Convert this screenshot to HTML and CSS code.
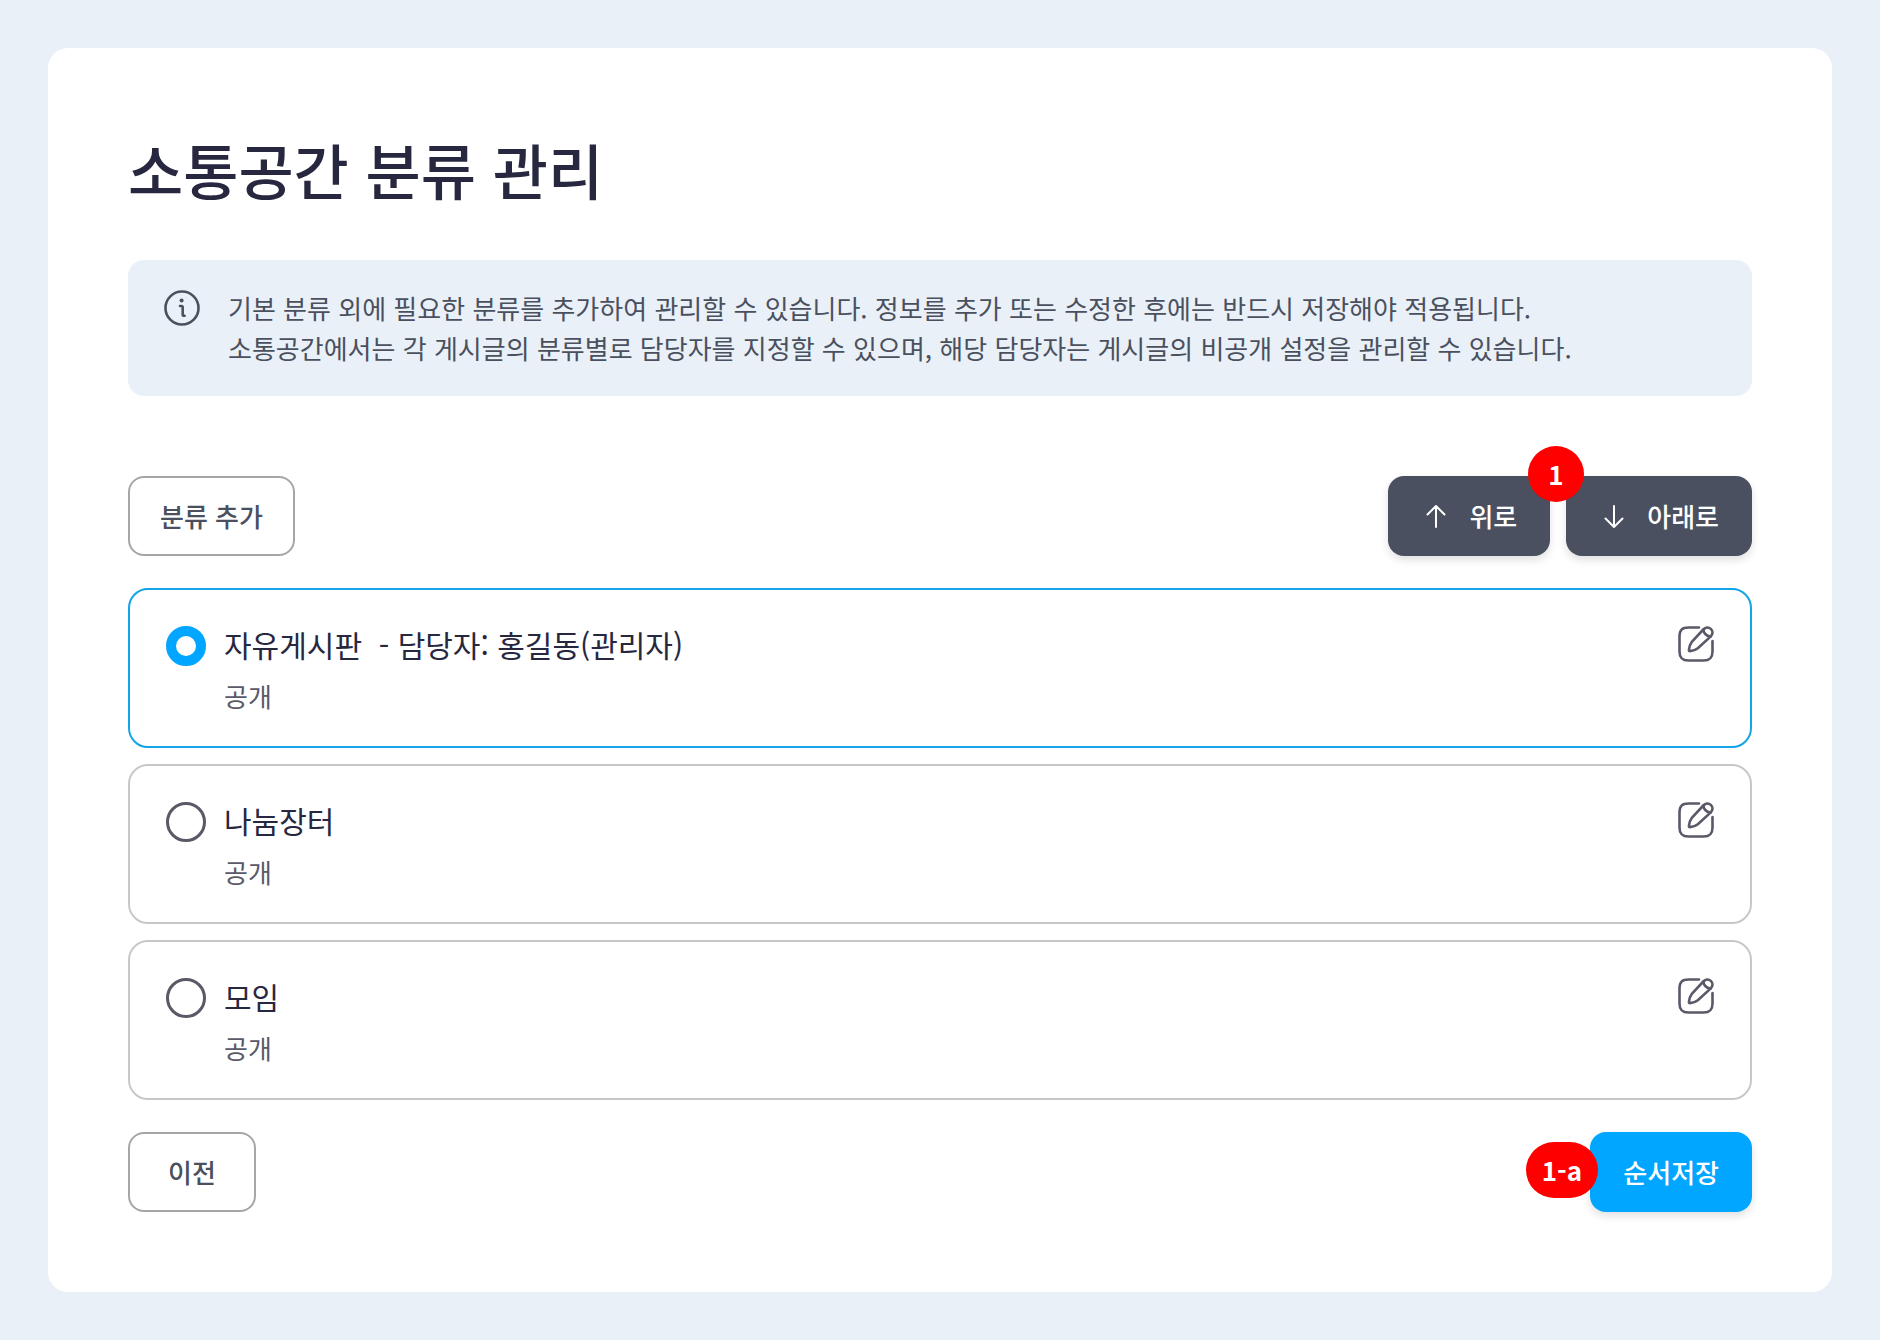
FILE: index.html
```html
<!DOCTYPE html>
<html lang="ko">
<head>
    <meta charset="UTF-8">
    <meta name="viewport" content="width=device-width, initial-scale=1.0">
    <title>소통공간 분류 관리</title>
    <link rel="stylesheet" href="styles.css">
</head>
<body>
    <!-- shared edit icon -->
    <svg class="sprite" aria-hidden="true">
        <symbol id="icon-edit" viewBox="0 0 36 36">
            <path d="M21 1.500H10.500C4 1.500 1.500 4 1.500 10.500v15c0 6.500 2.500 9 9 9h15c6.500 0 9-2.500 9-9V15"/>
            <path d="M25.300 3.500c2.200-2.300 5.200-2.700 7.500-.6s2.200 5.300 0 7.500L19.800 22.300c-2 1.700-5 2.600-7.800 2.800-.8 0-1.200-.4-1.100-1.200.2-2.800.9-5.400 2.700-7.700z"/>
            <path d="M25.300 3.500c.5 3.600 3.200 6.400 7.100 7.200"/>
        </symbol>
    </svg>

    <main class="panel">
        <h1 class="title">소통공간 분류 관리</h1>

        <div class="notice">
            <svg class="notice-icon" viewBox="0 0 36 36" aria-hidden="true">
                <circle cx="18" cy="18" r="16.500"/>
                <path d="M16 16h1.500c.8 0 1.200.4 1.200 1.200v7.300c0 .9.400 1.300 1.300 1.300h.6"/>
                <circle class="dot" cx="17.600" cy="10.600" r="2"/>
            </svg>
            <p>
                기본 분류 외에 필요한 분류를 추가하여 관리할 수 있습니다. 정보를 추가 또는 수정한 후에는 반드시 저장해야 적용됩니다.<br>
                소통공간에서는 각 게시글의 분류별로 담당자를 지정할 수 있으며, 해당 담당자는 게시글의 비공개 설정을 관리할 수 있습니다.
            </p>
        </div>

        <div class="toolbar">
            <button type="button" class="btn btn-outline">분류 추가</button>
            <div class="btn-group">
                <button type="button" class="btn btn-dark">
                    <svg class="arrow" viewBox="0 0 30 30" aria-hidden="true"><path d="M15 26V5M6.500 13.500L15 5l8.500 8.500"/></svg>
                    위로
                </button>
                <span class="badge badge-top">1</span>
                <button type="button" class="btn btn-dark">
                    <svg class="arrow" viewBox="0 0 30 30" aria-hidden="true"><path d="M15 5v21M6.500 17.500L15 26l8.500-8.500"/></svg>
                    아래로
                </button>
            </div>
        </div>

        <ul class="category-list">
            <li class="category selected">
                <input type="radio" name="category" id="cat1" checked>
                <label for="cat1">
                    <span class="name">자유게시판 &nbsp;- 담당자: 홍길동(관리자)</span>
                    <span class="state">공개</span>
                </label>
                <button type="button" class="edit" aria-label="수정"><svg><use href="#icon-edit"/></svg></button>
            </li>
            <li class="category">
                <input type="radio" name="category" id="cat2">
                <label for="cat2">
                    <span class="name">나눔장터</span>
                    <span class="state">공개</span>
                </label>
                <button type="button" class="edit" aria-label="수정"><svg><use href="#icon-edit"/></svg></button>
            </li>
            <li class="category">
                <input type="radio" name="category" id="cat3">
                <label for="cat3">
                    <span class="name">모임</span>
                    <span class="state">공개</span>
                </label>
                <button type="button" class="edit" aria-label="수정"><svg><use href="#icon-edit"/></svg></button>
            </li>
        </ul>

        <div class="footer">
            <button type="button" class="btn btn-outline">이전</button>
            <div class="btn-group">
                <span class="badge badge-side">1-a</span>
                <button type="button" class="btn btn-primary">순서저장</button>
            </div>
        </div>
    </main>
</body>
</html>
```

FILE: styles.css
```css
* {
    margin: 0;
    padding: 0;
    box-sizing: border-box;
}

body {
    font-family: 'Noto Sans CJK KR', sans-serif;
    font-size: 26px;
    line-height: 40px;
    background: #e9f0f8;
    color: #4b505e;
    padding: 48px;
}

.sprite {
    position: absolute;
    width: 0;
    height: 0;
}

.panel {
    background: #fff;
    border-radius: 20px;
    padding: 80px;
}

.title {
    font-size: 60px;
    line-height: 82px;
    font-weight: 500;
    color: #27283f;
    margin-bottom: 50px;
}

.notice {
    display: flex;
    align-items: flex-start;
    gap: 28px;
    padding: 28px 36px;
    background: #e9f0f8;
    border-radius: 16px;
    margin-bottom: 80px;
}

.notice-icon {
    flex: none;
    width: 36px;
    height: 36px;
    margin-top: 2px;
    fill: none;
    stroke: #4b505e;
    stroke-width: 2.600;
    stroke-linecap: round;
}

.notice-icon .dot {
    fill: #4b505e;
    stroke: none;
}

.toolbar,
.footer {
    display: flex;
    justify-content: space-between;
}

.btn-group {
    position: relative;
    display: flex;
    gap: 16px;
}

.btn {
    display: flex;
    align-items: center;
    justify-content: center;
    gap: 18px;
    min-width: 128px;
    height: 80px;
    padding: 0 33px;
    border: none;
    border-radius: 16px;
    font: inherit;
    font-weight: 500;
    color: #fff;
    cursor: pointer;
}

.btn-outline {
    padding: 0 30px;
    border: 2px solid #a6a6a8;
    background: #fff;
    color: #4b505e;
}

.btn-dark {
    background: #4a505f;
    box-shadow: 0 4px 8px rgba(0, 0, 0, 0.12);
}

.btn-primary {
    background: #00a6ff;
    box-shadow: 0 4px 8px rgba(0, 0, 0, 0.12);
}

.arrow {
    width: 30px;
    height: 30px;
    fill: none;
    stroke: #fff;
    stroke-width: 2;
    stroke-linecap: round;
    stroke-linejoin: round;
}

/* numbered markers sitting over the buttons */
.badge {
    position: absolute;
    min-width: 56px;
    height: 56px;
    padding: 0 16px;
    border-radius: 28px;
    background: #f00;
    color: #fff;
    font-weight: 700;
    line-height: 56px;
    text-align: center;
    white-space: nowrap;
}

.badge-top {
    top: -30px;
    right: 168px;
}

.badge-side {
    top: 10px;
    right: 154px;
}

.category-list {
    display: flex;
    flex-direction: column;
    gap: 16px;
    margin: 32px 0;
    list-style: none;
}

.category {
    display: flex;
    align-items: flex-start;
    gap: 18px;
    padding: 34px 36px 30px;
    border: 2px solid #c8c8ca;
    border-radius: 20px;
}

.category.selected {
    border-color: #14a5e6;
}

.category input {
    appearance: none;
    flex: none;
    width: 40px;
    height: 40px;
    margin-top: 2px;
    border: 3px solid #595968;
    border-radius: 50%;
    background: #fff;
}

.category input:checked {
    border: 10px solid #00a6ff;
}

.category label {
    flex: 1;
    display: flex;
    flex-direction: column;
    gap: 12px;
}

.name {
    font-size: 30px;
    color: #27283f;
}

.state {
    color: #595968;
}

.edit {
    flex: none;
    width: 36px;
    height: 36px;
    margin-top: 2px;
    border: none;
    background: none;
    cursor: pointer;
}

.edit svg {
    display: block;
    width: 36px;
    height: 36px;
    fill: none;
    stroke: #595968;
    stroke-width: 2.600;
    stroke-linecap: round;
    stroke-linejoin: round;
}
```
